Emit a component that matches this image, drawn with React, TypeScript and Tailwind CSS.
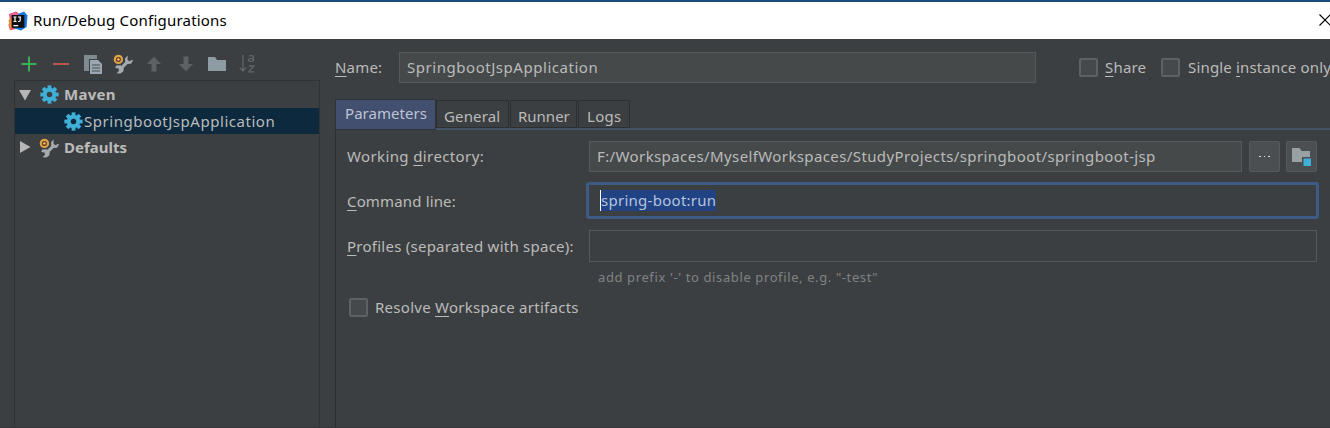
import type { ReactNode } from "react";

function Gear({ className }: { className: string }) {
  return (
    <svg viewBox="0 0 20 20" className={className}>
      <g fill="#40b0d8">
        {[0, 45, 90, 135].map((a) => (
          <rect key={a} x="8" y="0.4" width="4" height="19.2" transform={`rotate(${a} 10 10)`} />
        ))}
      </g>
      <circle cx="10" cy="10" r="5" fill="none" stroke="#40b0d8" strokeWidth="4.2" />
      <circle cx="10" cy="10" r="2.9" className="fill-[#3c3f41]" />
    </svg>
  );
}

function Wrench({ className }: { className: string }) {
  return (
    <svg viewBox="0 0 20 20" className={className}>
      <path d="M8 14.4 15 7.400" stroke="#a3abb0" strokeWidth="3" />
      <path d="M14.600 1.600 12 4.200l.200 4L14 10l4-.200 2-3.200-.600-.800-2.800 1.400-2-1.200z" fill="#a3abb0" />
      <path d="M3.200 11.600 7.600 11.200 10.800 14.400 10.200 17.600 7.400 19.400 3.600 19.200 6 16.800 5.600 14.600 2.200 14z" fill="#a3abb0" />
      <circle cx="5.400" cy="5.400" r="3.600" fill="#6b3424" stroke="#d9a445" strokeWidth="2.200" />
      <circle cx="5.400" cy="5.400" r="1.200" fill="#f0cf72" />
    </svg>
  );
}

function Arrow({ down }: { down?: boolean }) {
  return (
    <svg viewBox="0 0 16 16" className={down ? "h-4 w-4 rotate-180" : "h-4 w-4"}>
      <path d="M8 0.5 15 8H10.5V15.5H5.5V8H1z" fill="#5e6163" />
    </svg>
  );
}

function Logo() {
  return (
    <svg viewBox="0 0 20 20" className="h-5 w-5 shrink-0">
      <path d="M1 3 8 .5l4 3-2 14-8 1.800L.5 14 2 9z" fill="#e8425c" />
      <path d="M.5 9 5 5v11l-3 3z" fill="#f28a3c" />
      <path d="m10 3 6-2.400 3.500 4L18.600 16 13 19.500 5 17z" fill="#1879dc" />
      <path d="m1.500 3.400 6-2.600 3 3-7 4z" fill="#e9679b" />
      <rect x="3.6" y="4" width="12.8" height="12.8" fill="#111" />
      <path d="M5.500 6h3M7 6v4.500M5.500 10.500h3M10 6h3M12.200 6v3.300q0 1.200-1.200 1.200h-1M5.400 14.600h4.800" fill="none" stroke="#fff" strokeWidth="1.2" />
    </svg>
  );
}

function Mn({ children }: { children: ReactNode }) {
  return <span className="underline decoration-1 underline-offset-[3px]">{children}</span>;
}

function Check() {
  return <span className="h-[19px] w-[19px] shrink-0 rounded-[2px] border-2 border-[#5d6164] bg-[#45494b]" />;
}

export default function App() {
  return (
    <div className="flex h-[428px] w-[1330px] flex-col overflow-hidden border-b border-[#39343b] bg-[#3c3f41] font-['Noto_Sans','Liberation_Sans',sans-serif] text-[15px] leading-5 whitespace-nowrap text-[#bbbbbb]">
      <header className="flex h-[39px] shrink-0 items-center border-t-2 border-[#1b4d78] bg-white pl-2 text-black">
        <Logo />
        <span className="ml-[5px] pb-[2px] tracking-[0.21px]">Run/Debug Configurations</span>
        <svg viewBox="0 0 12 12" className="-mr-px mb-[2px] ml-auto h-3 w-3 shrink-0">
          <path d="M.5.5l11 11M11.5.5l-11 11" stroke="#000" strokeWidth="1.1" />
        </svg>
      </header>

      <div className="flex min-h-0 flex-1">
        <aside className="flex w-[320px] shrink-0 flex-col pl-[14px]">
          <div className="flex h-[41px] shrink-0 items-center gap-4 pt-[9px] pl-[7px]">
            <svg viewBox="0 0 16 16" className="h-4 w-4">
              <path d="M8 .5v15M.5 8h15" stroke="#36b055" strokeWidth="2" />
            </svg>
            <svg viewBox="0 0 16 16" className="h-4 w-4">
              <path d="M0 8h16" stroke="#b3594b" strokeWidth="2" />
            </svg>
            <svg viewBox="0 0 18 19" className="-mr-1 -ml-px h-[19px] w-[18px]">
              <path d="M0 0h13v4H5v12H0z" fill="#7f8b91" />
              <path d="M6 5h8l4 4v10H6z" fill="#9aa7b0" />
              <path d="M8 10h8M8 13h8M8 16h8" stroke="#4b5053" strokeWidth="1.2" />
            </svg>
            <Wrench className="-mr-[3px] -ml-px h-5 w-5" />
            <Arrow />
            <Arrow down />
            <svg viewBox="0 0 18 14" className="-ml-[2px] h-[14px] w-[18px]">
              <path d="M0 0h7l2 3h9v11H0z" fill="#8e9ba2" />
            </svg>
            <svg viewBox="0 0 16 18" className="-ml-[3px] h-[18px] w-4" fill="none" stroke="#626567" strokeWidth="1.3">
              <path d="M4 0v16M.8 12.5 4 16l3.2-3.5" />
              <path d="M10 1.200q4.500-1.400 4.500 1.300V6.500M14.500 3.500c-6-.600-6.500 2.800-3 2.800q2 0 3-1.500" />
              <path d="M9.800 11h5L9.800 16.800h5.400" />
            </svg>
          </div>
          <div className="min-h-0 flex-1 border border-b-0 border-[#303234]">
            <div className="flex h-[27px] items-center font-bold">
              <svg viewBox="0 0 12 12" className="ml-1 h-3 w-3"><path d="M0 1h12L6 11.500z" fill="#b4b6b7" /></svg>
              <Gear className="ml-[9px] h-[19px] w-[19px]" />
              <span className="ml-[5px] pb-[2px] tracking-[0.3px]">Maven</span>
            </div>
            <div className="flex h-[26px] items-center bg-[#0d293e] pl-[49px]">
              <Gear className="h-[19px] w-[19px] [&>circle:last-child]:fill-[#0d293e]" />
              <span className="ml-px tracking-[0.54px]">SpringbootJspApplication</span>
            </div>
            <div className="flex h-[27px] items-center font-bold">
              <svg viewBox="0 0 12 12" className="mb-[2px] ml-[5px] h-3 w-3"><path d="M0 0v12l10.500-6z" fill="#b4b6b7" /></svg>
              <Wrench className="ml-[7px] h-5 w-5" />
              <span className="ml-[5px] pb-[2px]">Defaults</span>
            </div>
          </div>
        </aside>

        <main className="ml-[15px] flex min-w-0 flex-1 flex-col pt-[13px]">
          <div className="flex h-[31px] shrink-0 items-center">
            <span className="w-16 shrink-0 pb-[2px] tracking-[0.2px]"><Mn>N</Mn>ame:</span>
            <div className="flex h-[31px] w-[637px] shrink-0 items-center border border-[#55595b] bg-[#45494a] pb-[2px] pl-[7px] tracking-[0.54px]">
              SpringbootJspApplication
            </div>
            <div className="ml-[43px] flex shrink-0 items-center">
              <Check />
              <span className="ml-[7px] w-[56px] pb-[2px] tracking-[0.2px]"><Mn>S</Mn>hare</span>
              <Check />
              <span className="ml-2 pb-[2px] tracking-[0.17px]">Single <Mn>i</Mn>nstance only</span>
            </div>
          </div>

          <div className="mt-[16px] flex h-[31px] shrink-0 items-end border-b-2 border-[#43536a]">
            <div className="-mb-0.5 flex h-[31px] w-[101px] items-center border border-[#303439] bg-[#434f6f] pb-[4px] pl-[9px] tracking-[0.05px] text-[#bcc3d4]">Parameters</div>
            <div className="flex h-[28px] w-[73px] items-center border border-[#2d3032] pt-[3px] pl-[7px] tracking-[0.15px]">General</div>
            <div className="ml-px flex h-[28px] w-[67px] items-center border border-[#2d3032] pt-[3px] pl-[7px]">Runner</div>
            <div className="ml-px flex h-[28px] w-[52px] items-center border border-[#2d3032] pt-[3px] pl-[8px] tracking-[0.3px]">Logs</div>
          </div>

          <div className="flex min-h-0 flex-1 flex-col border-l border-[#2b2d2f] pl-[11px]">
            <div className="mt-[11px] flex h-[31px] shrink-0 items-center">
              <span className="w-[242px] shrink-0 pb-px tracking-[0.38px]">Working <Mn>d</Mn>irectory:</span>
              <div className="flex h-[31px] w-[653px] items-center border border-[#55595b] bg-[#45494a] pb-[2px] pl-[7px] tracking-[0.39px]">
                F:/Workspaces/MyselfWorkspaces/StudyProjects/springboot/springboot-jsp
              </div>
              <div className="ml-[7px] flex h-[31px] w-[31px] items-center justify-center gap-[3px] rounded-[2px] border border-[#57595b] bg-[#4b4f51]">
                <i className="h-px w-[1.5px] bg-[#ddd]" />
                <i className="h-px w-[1.5px] bg-[#ddd]" />
                <i className="h-px w-[1.5px] bg-[#ddd]" />
              </div>
              <div className="ml-[6px] flex h-[31px] w-[31px] items-center justify-center rounded-[2px] border border-[#57595b] bg-[#4b4f51]">
                <svg viewBox="0 0 20 18" className="mt-px h-[18px] w-5">
                  <path d="M0 0h7.500l2 3H18v11H0z" fill="#99a1a5" />
                  <path d="M10 9h10v9H10z" fill="#4b4f51" />
                  <path d="M11.500 10.500h7.500v7.500h-7.500z" fill="#40b0d8" />
                </svg>
              </div>
            </div>
            <div className="mt-[10px] flex h-[37px] shrink-0 items-center">
              <span className="w-[239px] shrink-0 tracking-[0.15px]"><Mn>C</Mn>ommand line:</span>
              <div className="flex h-[37px] w-[733px] items-center rounded-[3px] border-[3px] border-[#3d5b85] bg-[#3c3f41] pl-[11px]">
                <span className="h-[21px] border-l border-white bg-[#214283] leading-[21px] tracking-[0.27px] text-[#b5c4df]">spring-boot:run</span>
              </div>
            </div>
            <div className="mt-[11px] flex h-[32px] shrink-0 items-center">
              <span className="w-[242px] shrink-0 tracking-[0.25px]"><Mn>P</Mn>rofiles (separated with space):</span>
              <div className="h-[32px] w-[728px] border border-[#55595b]" />
            </div>
            <div className="mt-[5px] shrink-0 pl-[251px] text-[13px] tracking-[0.61px] text-[#808284]">add prefix '-' to disable profile, e.g. "-test"</div>
            <div className="mt-[10px] flex shrink-0 items-center pl-[2px]">
              <Check />
              <span className="ml-[7px] tracking-[0.27px]">Resolve <Mn>W</Mn>orkspace artifacts</span>
            </div>
          </div>
        </main>
      </div>
    </div>
  );
}
